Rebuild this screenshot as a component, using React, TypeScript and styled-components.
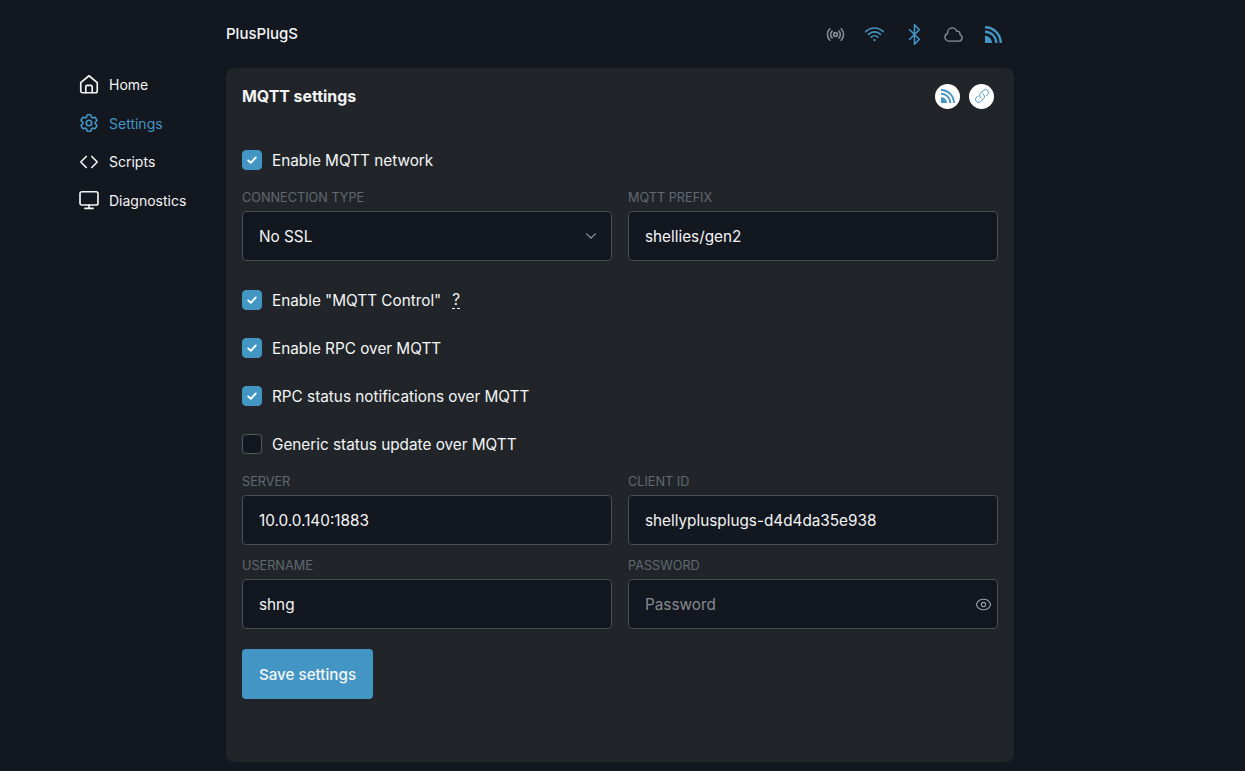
import React from 'react';
import styled, { createGlobalStyle } from 'styled-components';
import {
  HiOutlineCog6Tooth,
  HiOutlineWifi,
  HiOutlineCloud,
  HiOutlineLink,
  HiOutlineEye,
  HiOutlineChevronDown,
} from 'react-icons/hi2';
import { FiBluetooth } from 'react-icons/fi';

const BLUE = '#4396c3';
const PAGE = '#13171f';
const CARD = '#212529';

const GlobalStyle = createGlobalStyle`
  html, body {
    margin: 0;
    height: 100%;
    background: ${PAGE};
    overflow: hidden;
  }
  body {
    font-family: Inter, "Noto Sans", sans-serif;
    color: #f4f5f6;
    -webkit-font-smoothing: antialiased;
  }
  * {
    box-sizing: border-box;
  }
`;

const Page = styled.div`
  display: flex;
  height: 771px;
  padding-left: 80px;
`;

const Sidebar = styled.nav`
  width: 146px;
  padding-top: 65px;
  flex-shrink: 0;
`;

const NavItem = styled.div<{ $active?: boolean }>`
  display: flex;
  align-items: center;
  gap: 9.5px;
  height: 38.7px;
  font-size: 14px;
  color: ${({ $active }) => ($active ? BLUE : '#f4f5f6')};

  svg {
    width: 22px;
    height: 22px;
    flex-shrink: 0;
    margin-left: -2.5px;
    stroke-width: 1.8;
  }
`;

const Main = styled.main`
  width: 788px;
`;

const Header = styled.header`
  display: flex;
  align-items: center;
  justify-content: space-between;
  height: 68px;
  padding-right: 10px;
`;

const DeviceName = styled.div`
  font-size: 15px;
  font-weight: 500;
  margin-top: -1px;
`;

const StatusIcons = styled.div`
  display: flex;
  align-items: center;
  gap: 17.5px;
`;

const StatusIcon = styled.span<{ $on?: boolean; $size?: number; $stroke?: number }>`
  display: flex;
  width: 22px;
  height: 22px;
  align-items: center;
  justify-content: center;
  color: ${({ $on }) => ($on ? BLUE : '#8c9096')};

  svg {
    width: ${({ $size }) => $size ?? 21}px;
    height: ${({ $size }) => $size ?? 21}px;
    stroke-width: ${({ $stroke }) => $stroke ?? 1.8};
  }
`;

const Card = styled.section`
  height: 694px;
  padding: 0 16px;
  background: ${CARD};
  border-radius: 8px;
`;

const CardHeader = styled.div`
  display: flex;
  align-items: center;
  justify-content: space-between;
  height: 56px;
  padding-right: 4px;
`;

const CardTitle = styled.h2`
  margin: 0;
  font-size: 15.9px;
  font-weight: 700;
`;

const CardActions = styled.div`
  display: flex;
  gap: 9px;
`;

const RoundButton = styled.span<{ $size: number }>`
  display: flex;
  align-items: center;
  justify-content: center;
  width: 25px;
  height: 25px;
  border-radius: 50%;
  background: #fff;
  color: ${BLUE};

  svg {
    width: ${({ $size }) => $size}px;
    height: ${({ $size }) => $size}px;
  }
`;

const Form = styled.form`
  margin: 12px 0 0;
`;

const CheckRow = styled.label`
  display: flex;
  align-items: center;
  gap: 10px;
  height: 48px;
  font-size: 15.3px;
`;

const CheckBox = styled.span<{ $checked?: boolean }>`
  display: flex;
  align-items: center;
  justify-content: center;
  width: 20px;
  height: 20px;
  border-radius: 4px;
  background: ${({ $checked }) => ($checked ? BLUE : PAGE)};
  border: 1px solid ${({ $checked }) => ($checked ? BLUE : '#555b66')};
`;

const Hint = styled.span`
  margin-left: 1px;
  border-bottom: 1px dashed #f4f5f6;
  line-height: 16px;
`;

const FieldRow = styled.div<{ $top?: number; $bottom?: number }>`
  display: grid;
  grid-template-columns: 370px 370px;
  gap: 16px;
  margin-top: ${({ $top }) => $top ?? 0}px;
  margin-bottom: ${({ $bottom }) => $bottom ?? 0}px;
`;

const Field = styled.div`
  position: relative;
`;

const FieldLabel = styled.div`
  height: 16px;
  margin-bottom: 6px;
  font-size: 12.7px;
  line-height: 17px;
  text-transform: uppercase;
  color: #626872;
`;

const TextInput = styled.input`
  display: block;
  width: 100%;
  height: 50px;
  padding: 0 16px;
  background: ${PAGE};
  border: 1px solid #484d57;
  border-radius: 4px;
  outline: none;
  font-family: inherit;
  font-size: 15.3px;
  color: #f4f5f6;

  &::placeholder {
    color: #868a91;
    opacity: 1;
  }
`;

const Select = styled(TextInput).attrs({ as: 'select' })`
  appearance: none;
`;

const FieldIcon = styled.span`
  position: absolute;
  right: 6px;
  bottom: 16px;
  display: flex;
  color: #9a9ea4;
  pointer-events: none;

  svg {
    width: 17px;
    height: 17px;
  }
`;

const ChevronIcon = styled(FieldIcon)`
  right: 14px;
  bottom: 18px;

  svg {
    width: 14px;
    height: 14px;
    stroke-width: 2;
  }
`;

const SaveButton = styled.button`
  display: block;
  width: 131px;
  height: 50px;
  margin-top: 20px;
  background: ${BLUE};
  border: none;
  border-radius: 4px;
  font-family: inherit;
  font-size: 15.2px;
  font-weight: 500;
  color: #f4f5f6;
`;

const Check = () => (
  <svg width="12" height="12" viewBox="0 0 12 12" fill="none">
    <path d="M2.2 6.4 4.8 8.8 9.8 3.4" stroke="#fff" strokeWidth="1.9" strokeLinecap="round" strokeLinejoin="round" />
  </svg>
);

const HomeIcon = () => (
  <svg viewBox="0 0 24 24" fill="none" stroke="currentColor" strokeLinejoin="round" strokeLinecap="round">
    <path d="M3 10.6 12 3l9 7.6V19.5a2 2 0 0 1-2 2H5a2 2 0 0 1-2-2Z" />
    <path d="M8.5 21.5V15a1.5 1.5 0 0 1 1.5-1.5h4a1.5 1.5 0 0 1 1.5 1.5v6.5" />
  </svg>
);

const CodeIcon = () => (
  <svg viewBox="0 0 24 24" fill="none" stroke="currentColor" strokeLinejoin="round" strokeLinecap="round">
    <path d="M9 6 3 12l6 6M15 6l6 6-6 6" />
  </svg>
);

const MonitorIcon = () => (
  <svg viewBox="0 0 24 24" fill="none" stroke="currentColor" strokeLinejoin="round" strokeLinecap="round">
    <rect x="2.2" y="3" width="19.6" height="14.5" rx="2" />
    <path d="M12 17.5V21M7.5 21.2h9" />
  </svg>
);

const SignalIcon = () => (
  <svg viewBox="0 0 24 24" fill="none" stroke="currentColor" strokeLinecap="round">
    <circle cx="12" cy="12" r="2.4" />
    <path d="M7.7 7.7a6 6 0 0 0 0 8.6M16.3 7.7a6 6 0 0 1 0 8.6M4.8 4.8a10.2 10.2 0 0 0 0 14.4M19.2 4.8a10.2 10.2 0 0 1 0 14.4" />
  </svg>
);

const RssIcon = () => (
  <svg viewBox="0 0 16 16" fill="none">
    <path d="M0 16V9.2A6.8 6.8 0 0 1 6.8 16Z" fill="currentColor" stroke="none" />
    <path d="M0 5.4A10.6 10.6 0 0 1 10.6 16M0 1.2A14.8 14.8 0 0 1 14.8 16" stroke="currentColor" strokeWidth="2.2" />
  </svg>
);

const CheckField = ({ checked, children }: { checked?: boolean; children: React.ReactNode }) => (
  <CheckRow>
    <CheckBox $checked={checked}>{checked && <Check />}</CheckBox>
    {children}
  </CheckRow>
);

const Input = ({ label, value, placeholder, icon }: { label: string; value?: string; placeholder?: string; icon?: React.ReactNode }) => (
  <Field>
    <FieldLabel>{label}</FieldLabel>
    <TextInput readOnly value={value} placeholder={placeholder} />
    {icon && <FieldIcon>{icon}</FieldIcon>}
  </Field>
);

const App = () => (
  <Page>
    <GlobalStyle />
    <Sidebar>
      <NavItem><HomeIcon />Home</NavItem>
      <NavItem $active><HiOutlineCog6Tooth />Settings</NavItem>
      <NavItem><CodeIcon />Scripts</NavItem>
      <NavItem><MonitorIcon />Diagnostics</NavItem>
    </Sidebar>
    <Main>
      <Header>
        <DeviceName>PlusPlugS</DeviceName>
        <StatusIcons>
          <StatusIcon $size={19} $stroke={2}><SignalIcon /></StatusIcon>
          <StatusIcon $on><HiOutlineWifi /></StatusIcon>
          <StatusIcon $on><FiBluetooth /></StatusIcon>
          <StatusIcon $stroke={1.5}><HiOutlineCloud /></StatusIcon>
          <StatusIcon $on $size={17}><RssIcon /></StatusIcon>
        </StatusIcons>
      </Header>
      <Card>
        <CardHeader>
          <CardTitle>MQTT settings</CardTitle>
          <CardActions>
            <RoundButton $size={14}><RssIcon /></RoundButton>
            <RoundButton $size={16}><HiOutlineLink /></RoundButton>
          </CardActions>
        </CardHeader>
        <Form>
          <CheckField checked>Enable MQTT network</CheckField>
          <FieldRow $top={5} $bottom={15}>
            <Field>
              <FieldLabel>Connection type</FieldLabel>
              <Select defaultValue="none">
                <option value="none">No SSL</option>
              </Select>
              <ChevronIcon><HiOutlineChevronDown /></ChevronIcon>
            </Field>
            <Input label="MQTT prefix" value="shellies/gen2" />
          </FieldRow>
          <CheckField checked>Enable "MQTT Control" <Hint>?</Hint></CheckField>
          <CheckField checked>Enable RPC over MQTT</CheckField>
          <CheckField checked>RPC status notifications over MQTT</CheckField>
          <CheckField>Generic status update over MQTT</CheckField>
          <FieldRow $top={5} $bottom={12}>
            <Input label="Server" value="10.0.0.140:1883" />
            <Input label="Client ID" value="shellyplusplugs-d4d4da35e938" />
          </FieldRow>
          <FieldRow>
            <Input label="Username" value="shng" />
            <Input label="Password" placeholder="Password" icon={<HiOutlineEye />} />
          </FieldRow>
          <SaveButton type="button">Save settings</SaveButton>
        </Form>
      </Card>
    </Main>
  </Page>
);

export default App;
